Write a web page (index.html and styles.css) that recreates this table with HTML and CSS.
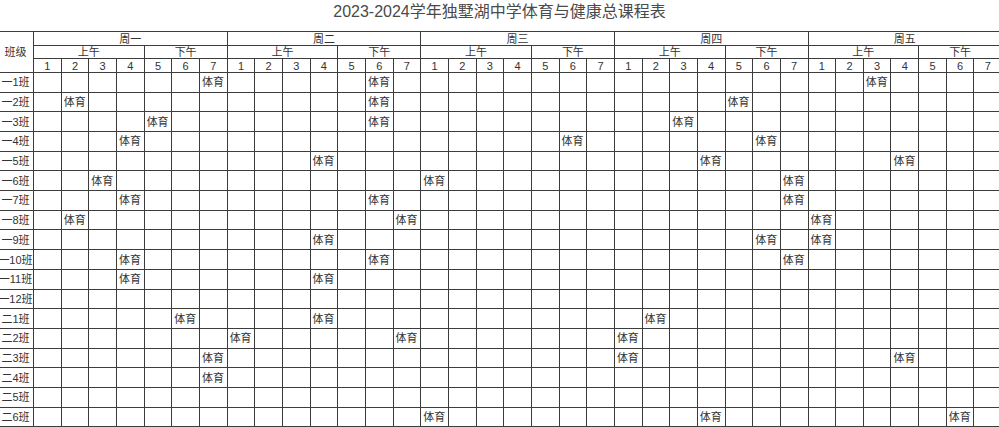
FILE: index.html
```html
<!DOCTYPE html>
<html lang="zh-CN">
<head>
<meta charset="utf-8">
<title>课程表</title>
<link rel="stylesheet" href="styles.css">
</head>
<body>
<div class="title">2023-2024学年独墅湖中学体育与健康总课程表</div>
<table class="sheet">
<colgroup>
<col class="c-class">
<col class="c-p"><col class="c-p"><col class="c-p"><col class="c-p"><col class="c-p"><col class="c-p"><col class="c-p">
<col class="c-p"><col class="c-p"><col class="c-p"><col class="c-p"><col class="c-p"><col class="c-p"><col class="c-p">
<col class="c-p"><col class="c-p"><col class="c-p"><col class="c-p"><col class="c-p"><col class="c-p"><col class="c-p">
<col class="c-p"><col class="c-p"><col class="c-p"><col class="c-p"><col class="c-p"><col class="c-p"><col class="c-p">
<col class="c-p"><col class="c-p"><col class="c-p"><col class="c-p"><col class="c-p"><col class="c-p"><col class="c-p">
</colgroup>
<thead>
<tr class="h1">
<th class="cls" rowspan="3">班级</th>
<th colspan="7">周一</th><th colspan="7">周二</th><th colspan="7">周三</th><th colspan="7">周四</th><th colspan="7">周五</th>
</tr>
<tr class="h2">
<th colspan="4">上午</th><th colspan="3">下午</th>
<th colspan="4">上午</th><th colspan="3">下午</th>
<th colspan="4">上午</th><th colspan="3">下午</th>
<th colspan="4">上午</th><th colspan="3">下午</th>
<th colspan="4">上午</th><th colspan="3">下午</th>
</tr>
<tr class="h3">
<th>1</th><th>2</th><th>3</th><th>4</th><th>5</th><th>6</th><th>7</th>
<th>1</th><th>2</th><th>3</th><th>4</th><th>5</th><th>6</th><th>7</th>
<th>1</th><th>2</th><th>3</th><th>4</th><th>5</th><th>6</th><th>7</th>
<th>1</th><th>2</th><th>3</th><th>4</th><th>5</th><th>6</th><th>7</th>
<th>1</th><th>2</th><th>3</th><th>4</th><th>5</th><th>6</th><th>7</th>
</tr>
</thead>
<tbody>
<tr><td class="cls">一1班</td>
<td></td><td></td><td></td><td></td><td></td><td></td><td>体育</td>
<td></td><td></td><td></td><td></td><td></td><td>体育</td><td></td>
<td></td><td></td><td></td><td></td><td></td><td></td><td></td>
<td></td><td></td><td></td><td></td><td></td><td></td><td></td>
<td></td><td></td><td>体育</td><td></td><td></td><td></td><td></td>
</tr>
<tr><td class="cls">一2班</td>
<td></td><td>体育</td><td></td><td></td><td></td><td></td><td></td>
<td></td><td></td><td></td><td></td><td></td><td>体育</td><td></td>
<td></td><td></td><td></td><td></td><td></td><td></td><td></td>
<td></td><td></td><td></td><td></td><td>体育</td><td></td><td></td>
<td></td><td></td><td></td><td></td><td></td><td></td><td></td>
</tr>
<tr><td class="cls">一3班</td>
<td></td><td></td><td></td><td></td><td>体育</td><td></td><td></td>
<td></td><td></td><td></td><td></td><td></td><td>体育</td><td></td>
<td></td><td></td><td></td><td></td><td></td><td></td><td></td>
<td></td><td></td><td>体育</td><td></td><td></td><td></td><td></td>
<td></td><td></td><td></td><td></td><td></td><td></td><td></td>
</tr>
<tr><td class="cls">一4班</td>
<td></td><td></td><td></td><td>体育</td><td></td><td></td><td></td>
<td></td><td></td><td></td><td></td><td></td><td></td><td></td>
<td></td><td></td><td></td><td></td><td></td><td>体育</td><td></td>
<td></td><td></td><td></td><td></td><td></td><td>体育</td><td></td>
<td></td><td></td><td></td><td></td><td></td><td></td><td></td>
</tr>
<tr><td class="cls">一5班</td>
<td></td><td></td><td></td><td></td><td></td><td></td><td></td>
<td></td><td></td><td></td><td>体育</td><td></td><td></td><td></td>
<td></td><td></td><td></td><td></td><td></td><td></td><td></td>
<td></td><td></td><td></td><td>体育</td><td></td><td></td><td></td>
<td></td><td></td><td></td><td>体育</td><td></td><td></td><td></td>
</tr>
<tr><td class="cls">一6班</td>
<td></td><td></td><td>体育</td><td></td><td></td><td></td><td></td>
<td></td><td></td><td></td><td></td><td></td><td></td><td></td>
<td>体育</td><td></td><td></td><td></td><td></td><td></td><td></td>
<td></td><td></td><td></td><td></td><td></td><td></td><td>体育</td>
<td></td><td></td><td></td><td></td><td></td><td></td><td></td>
</tr>
<tr><td class="cls">一7班</td>
<td></td><td></td><td></td><td>体育</td><td></td><td></td><td></td>
<td></td><td></td><td></td><td></td><td></td><td>体育</td><td></td>
<td></td><td></td><td></td><td></td><td></td><td></td><td></td>
<td></td><td></td><td></td><td></td><td></td><td></td><td>体育</td>
<td></td><td></td><td></td><td></td><td></td><td></td><td></td>
</tr>
<tr><td class="cls">一8班</td>
<td></td><td>体育</td><td></td><td></td><td></td><td></td><td></td>
<td></td><td></td><td></td><td></td><td></td><td></td><td>体育</td>
<td></td><td></td><td></td><td></td><td></td><td></td><td></td>
<td></td><td></td><td></td><td></td><td></td><td></td><td></td>
<td>体育</td><td></td><td></td><td></td><td></td><td></td><td></td>
</tr>
<tr><td class="cls">一9班</td>
<td></td><td></td><td></td><td></td><td></td><td></td><td></td>
<td></td><td></td><td></td><td>体育</td><td></td><td></td><td></td>
<td></td><td></td><td></td><td></td><td></td><td></td><td></td>
<td></td><td></td><td></td><td></td><td></td><td>体育</td><td></td>
<td>体育</td><td></td><td></td><td></td><td></td><td></td><td></td>
</tr>
<tr><td class="cls">一10班</td>
<td></td><td></td><td></td><td>体育</td><td></td><td></td><td></td>
<td></td><td></td><td></td><td></td><td></td><td>体育</td><td></td>
<td></td><td></td><td></td><td></td><td></td><td></td><td></td>
<td></td><td></td><td></td><td></td><td></td><td></td><td>体育</td>
<td></td><td></td><td></td><td></td><td></td><td></td><td></td>
</tr>
<tr><td class="cls">一11班</td>
<td></td><td></td><td></td><td>体育</td><td></td><td></td><td></td>
<td></td><td></td><td></td><td>体育</td><td></td><td></td><td></td>
<td></td><td></td><td></td><td></td><td></td><td></td><td></td>
<td></td><td></td><td></td><td></td><td></td><td></td><td></td>
<td></td><td></td><td></td><td></td><td></td><td></td><td></td>
</tr>
<tr><td class="cls">一12班</td>
<td></td><td></td><td></td><td></td><td></td><td></td><td></td>
<td></td><td></td><td></td><td></td><td></td><td></td><td></td>
<td></td><td></td><td></td><td></td><td></td><td></td><td></td>
<td></td><td></td><td></td><td></td><td></td><td></td><td></td>
<td></td><td></td><td></td><td></td><td></td><td></td><td></td>
</tr>
<tr><td class="cls">二1班</td>
<td></td><td></td><td></td><td></td><td></td><td>体育</td><td></td>
<td></td><td></td><td></td><td>体育</td><td></td><td></td><td></td>
<td></td><td></td><td></td><td></td><td></td><td></td><td></td>
<td></td><td>体育</td><td></td><td></td><td></td><td></td><td></td>
<td></td><td></td><td></td><td></td><td></td><td></td><td></td>
</tr>
<tr><td class="cls">二2班</td>
<td></td><td></td><td></td><td></td><td></td><td></td><td></td>
<td>体育</td><td></td><td></td><td></td><td></td><td></td><td>体育</td>
<td></td><td></td><td></td><td></td><td></td><td></td><td></td>
<td>体育</td><td></td><td></td><td></td><td></td><td></td><td></td>
<td></td><td></td><td></td><td></td><td></td><td></td><td></td>
</tr>
<tr><td class="cls">二3班</td>
<td></td><td></td><td></td><td></td><td></td><td></td><td>体育</td>
<td></td><td></td><td></td><td></td><td></td><td></td><td></td>
<td></td><td></td><td></td><td></td><td></td><td></td><td></td>
<td>体育</td><td></td><td></td><td></td><td></td><td></td><td></td>
<td></td><td></td><td></td><td>体育</td><td></td><td></td><td></td>
</tr>
<tr><td class="cls">二4班</td>
<td></td><td></td><td></td><td></td><td></td><td></td><td>体育</td>
<td></td><td></td><td></td><td></td><td></td><td></td><td></td>
<td></td><td></td><td></td><td></td><td></td><td></td><td></td>
<td></td><td></td><td></td><td></td><td></td><td></td><td></td>
<td></td><td></td><td></td><td></td><td></td><td></td><td></td>
</tr>
<tr><td class="cls">二5班</td>
<td></td><td></td><td></td><td></td><td></td><td></td><td></td>
<td></td><td></td><td></td><td></td><td></td><td></td><td></td>
<td></td><td></td><td></td><td></td><td></td><td></td><td></td>
<td></td><td></td><td></td><td></td><td></td><td></td><td></td>
<td></td><td></td><td></td><td></td><td></td><td></td><td></td>
</tr>
<tr><td class="cls">二6班</td>
<td></td><td></td><td></td><td></td><td></td><td></td><td></td>
<td></td><td></td><td></td><td></td><td></td><td></td><td></td>
<td>体育</td><td></td><td></td><td></td><td></td><td></td><td></td>
<td></td><td></td><td></td><td>体育</td><td></td><td></td><td></td>
<td></td><td></td><td></td><td></td><td></td><td>体育</td><td></td>
</tr>
</tbody>
</table>
</body>
</html>
```

FILE: styles.css
```css
html, body {
  margin: 0;
  padding: 0;
  background: #ffffff;
}
body {
  width: 999px;
  height: 427px;
  overflow: hidden;
  font-family: "Liberation Sans", "Noto Sans CJK SC", sans-serif;
  color: #333333;
}
.title {
  height: 31px;
  line-height: 24px;
  text-align: center;
  font-size: 16px;
  color: #4a4a4a;
  white-space: nowrap;
}
.sheet {
  border-collapse: collapse;
  table-layout: fixed;
  width: 1004.5px;
  margin-left: -3px;
  font-size: 11px;
  color: #333333;
}
.c-class { width: 36px; }
.c-p { width: 27.67px; }
.sheet th,
.sheet td {
  border: 1px solid #3c3c3c;
  padding: 0 0 0 2px;
  white-space: nowrap;
  overflow: hidden;
  line-height: 12px;
  text-align: left;
  vertical-align: middle;
}
.sheet th {
  font-weight: normal;
  text-align: center;
  padding: 0;
}
.sheet .cls {
  text-align: center;
  padding: 0;
}
.h1 { height: 14px; }
.h2 { height: 13.3px; }
.h3 { height: 13.7px; }
.sheet tbody tr { height: 19.7px; }
```
